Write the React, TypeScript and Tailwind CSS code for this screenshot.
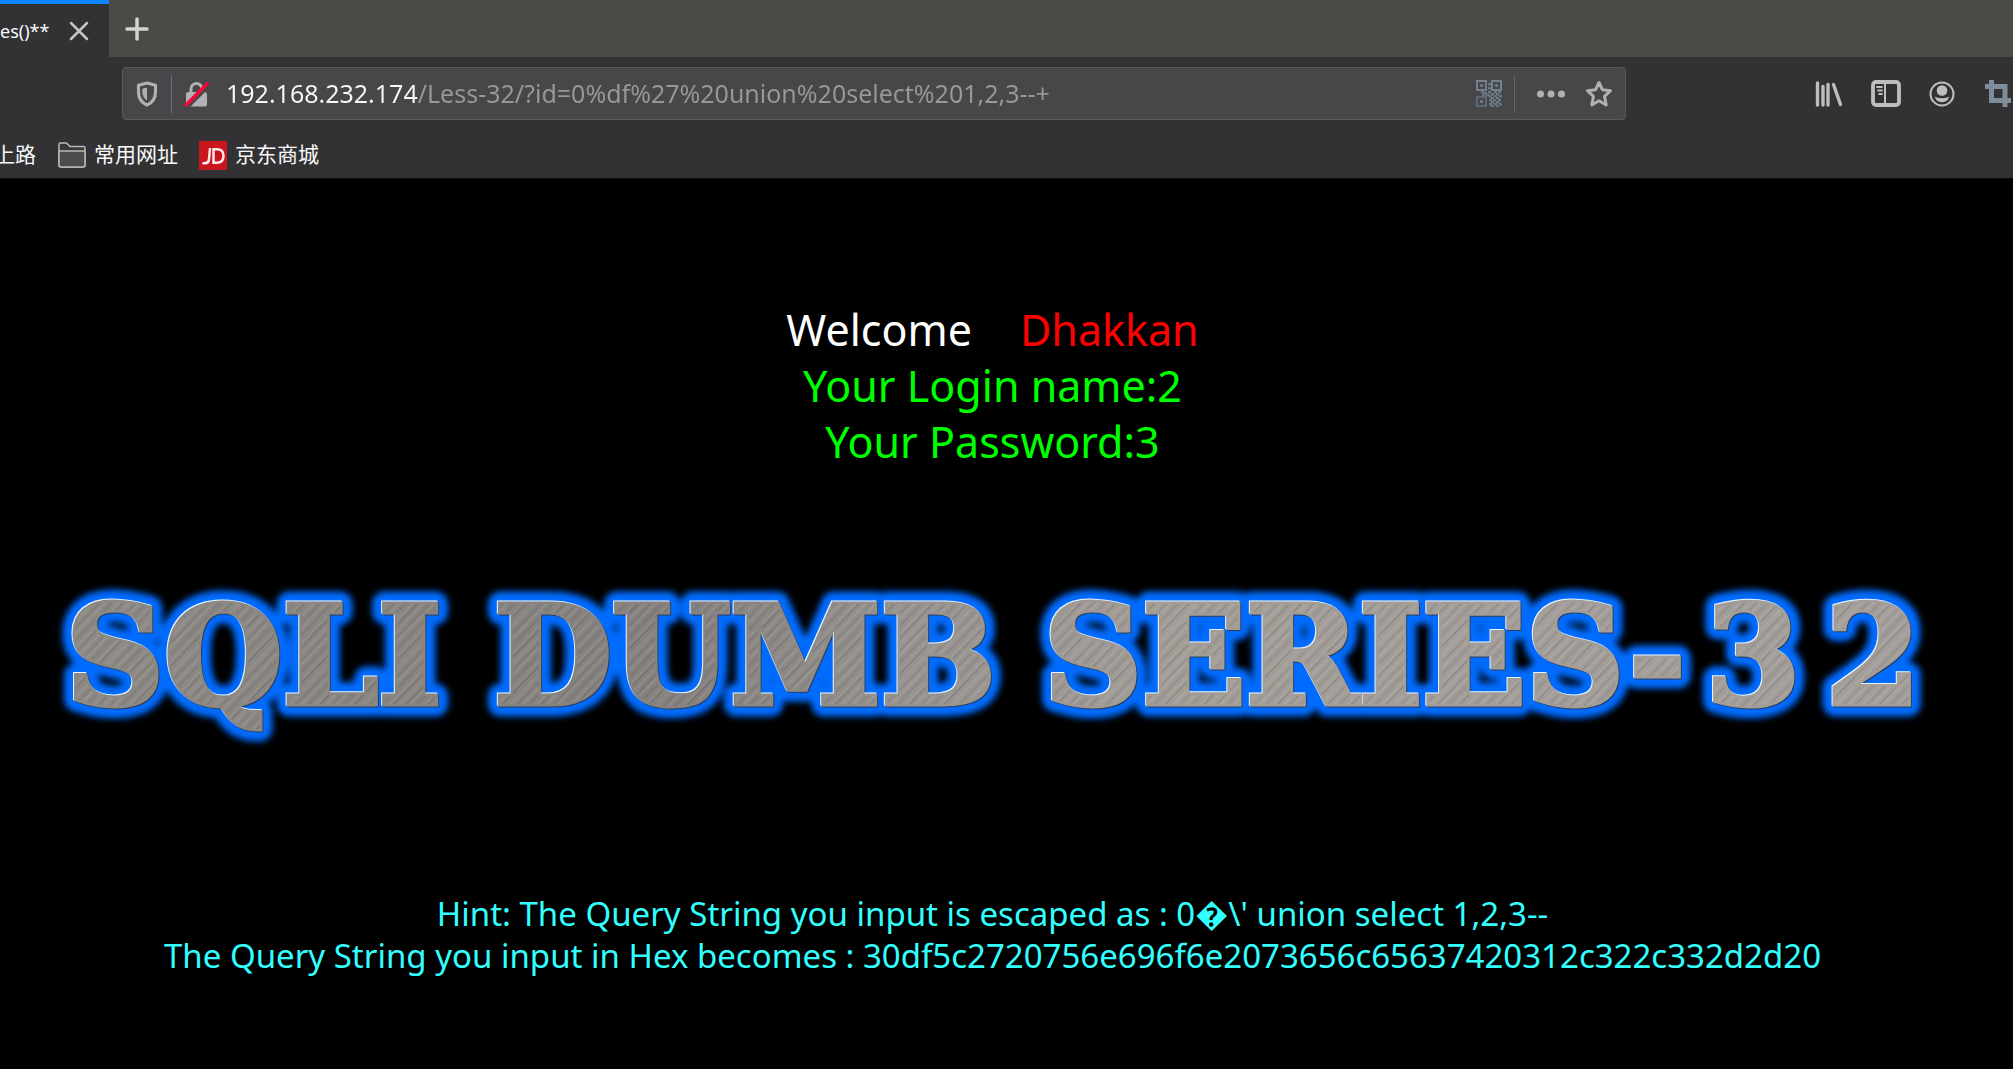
import React from "react";

const uiFont = "font-['Noto_Sans','Noto_Sans_CJK_SC',sans-serif]";

function ShieldIcon() {
  return (
    <svg width="24" height="26" viewBox="0 0 24 26" aria-hidden="true">
      <path
        d="M12 2 L20.5 4.3 V11 C20.5 17 17.5 21.6 12 24 C6.500 21.600 3.500 17 3.500 11 V4.300 Z"
        fill="none"
        stroke="#b1b1b3"
        strokeWidth="3.200"
        strokeLinejoin="round"
      />
      <path d="M12 6.500 V19.500 C8.800 17.500 7.400 14.500 7.400 11 V7.700 Z" fill="#b1b1b3" />
    </svg>
  );
}

function InsecureLockIcon() {
  return (
    <svg width="26" height="26" viewBox="0 0 26 26" aria-hidden="true">
      <path d="M7 13 V8 A5.500 5.500 0 0 1 18 8 V13" fill="none" stroke="#b1b1b3" strokeWidth="3" />
      <rect x="2" y="11" width="21" height="14.500" rx="2.500" fill="#b1b1b3" />
      <path d="M3.500 26.500 L26 4" stroke="#474749" strokeWidth="3" />
      <path d="M2 24 L23.500 2.500" stroke="#ff0039" strokeWidth="3.200" strokeLinecap="round" />
    </svg>
  );
}

function QrIcon() {
  const cells = [
    [12, 3], [12, 7], [5, 11], [8, 12], [12, 11], [18, 11], [22, 11],
    [6, 14], [10, 14], [15, 13], [20, 13], [13, 15], [18, 15], [23, 15],
    [15, 17], [20, 17], [13, 19], [17, 19], [22, 19], [15, 21], [20, 21],
    [13, 23], [18, 23], [23, 23], [15, 25], [20, 25],
  ];
  return (
    <svg width="26" height="27" viewBox="0 0 26 27" fill="#6b7884" aria-hidden="true">
      <g fill="none" stroke="#73808d" strokeWidth="2">
        <rect x="1" y="1" width="9" height="9" />
        <rect x="16" y="1" width="9" height="9" />
        <rect x="1" y="17" width="9" height="9" stroke="#5c6874" />
      </g>
      <rect x="4" y="4" width="3" height="3" />
      <rect x="19" y="4" width="3" height="3" />
      <rect x="4" y="20" width="3" height="3" />
      {cells.map(([x, y]) => (
        <rect key={`${x}-${y}`} x={x} y={y} width="3" height="2.500" />
      ))}
    </svg>
  );
}

function StarIcon() {
  return (
    <svg width="28" height="28" viewBox="0 0 28 28" aria-hidden="true">
      <path
        d="M14 2.500 L17.400 9.700 L25.500 10.700 L19.500 16.300 L21.200 25 L14 20.800 L6.800 25 L8.500 16.300 L2.500 10.700 L10.600 9.700 Z"
        fill="none"
        stroke="#b1b1b3"
        strokeWidth="3"
        strokeLinejoin="round"
      />
    </svg>
  );
}

function LibraryIcon() {
  return (
    <svg width="28" height="26" viewBox="0 0 28 26" stroke="#bebebf" strokeWidth="3.400" strokeLinecap="round" aria-hidden="true">
      <path d="M2.500 2 V24 M8 5.500 V24 M13 3.500 V24 M18.500 3.500 L25.500 23.500" />
    </svg>
  );
}

function SidebarIcon() {
  return (
    <svg width="30" height="27" viewBox="0 0 30 27" fill="none" stroke="#bebebf" aria-hidden="true">
      <rect x="2" y="2" width="26" height="23" rx="3" strokeWidth="3.800" />
      <path d="M14 2 V25" strokeWidth="2" />
      <path d="M6 7 H11 M7 10.500 H11 M8 14 H11" strokeWidth="1.800" strokeLinecap="round" />
    </svg>
  );
}

function AccountIcon() {
  return (
    <svg width="26" height="26" viewBox="0 0 26 26" aria-hidden="true">
      <circle cx="13" cy="13" r="11.500" fill="none" stroke="#bebebf" strokeWidth="2" />
      <circle cx="13" cy="9.500" r="5.300" fill="#bebebf" />
      <path d="M6 15.500 C8.500 17.800 17.500 17.800 20 15.500 C19.800 19 16.800 21.200 13 21.200 C9.200 21.200 6.200 19 6 15.500 Z" fill="#bebebf" />
    </svg>
  );
}

function CropIcon() {
  return (
    <svg width="28" height="27" viewBox="0 0 28 27" fill="none" stroke="#7f8c99" strokeWidth="5" aria-hidden="true">
      <path d="M6.500 0 V20.500 H26" />
      <path d="M0 6.500 H20 V27" />
    </svg>
  );
}

function FolderIcon() {
  return (
    <svg width="28" height="26" viewBox="0 0 28 26" stroke="#b9b9ba" strokeWidth="1.500" strokeLinejoin="round" aria-hidden="true">
      <path d="M1 23 V2.500 Q1 1 2.500 1 H8.500 L12 4.500 H25.500 Q27 4.500 27 6 V23 Q27 25 25 25 H3 Q1 25 1 23 Z" fill="#38383a" />
      <path d="M1 9 H27 V23 Q27 25 25 25 H3 Q1 25 1 23 Z" fill="#4c4c4e" />
    </svg>
  );
}

function JdIcon() {
  return (
    <svg width="28" height="29" viewBox="0 0 28 29" aria-hidden="true">
      <rect width="28" height="29" fill="#c9151e" />
      <g fill="none" stroke="#fbe9ea" strokeWidth="2.500">
        <path d="M11 7 L10 18.500 Q9.500 22.300 6 22.300 H3.500" />
        <path d="M14.500 22 V8.300 H18 Q24.500 8.300 24.500 15 Q24.500 21.700 18 21.700 H13.300" />
      </g>
    </svg>
  );
}

function LogoWords() {
  return (
    <>
      <text x="66" y="134">SQLI</text>
      <text x="494" y="134">DUMB</text>
      <text x="1044" y="134">SERIES-</text>
      <text x="1706" y="134">3</text>
      <text x="1826" y="134">2</text>
    </>
  );
}

function Logo() {
  return (
    <svg
      viewBox="0 0 1985 180"
      className="block h-auto w-full font-['DejaVu_Serif',serif] text-[136px] font-bold"
      role="img"
      aria-label="SQLI DUMB SERIES-32"
    >
      <defs>
        <linearGradient id="steel" gradientUnits="userSpaceOnUse" x1="0" y1="0" x2="1985" y2="0">
          <stop offset="0" stopColor="#8e8a86" />
          <stop offset="0.350" stopColor="#85817e" />
          <stop offset="0.450" stopColor="#96928f" />
          <stop offset="0.600" stopColor="#a39d98" />
          <stop offset="1" stopColor="#a39e9a" />
        </linearGradient>
        <pattern id="brush" width="400" height="53" patternUnits="userSpaceOnUse" patternTransform="rotate(-46)">
          <rect y="2" width="400" height="1" fill="#fff" opacity="0.120" />
          <rect y="5" width="400" height="1" fill="#000" opacity="0.160" />
          <rect y="9" width="400" height="2" fill="#fff" opacity="0.080" />
          <rect y="14" width="400" height="1" fill="#000" opacity="0.120" />
          <rect y="17" width="400" height="1" fill="#fff" opacity="0.140" />
          <rect y="21" width="400" height="3" fill="#000" opacity="0.060" />
          <rect y="27" width="400" height="1" fill="#fff" opacity="0.100" />
          <rect y="30" width="400" height="1" fill="#000" opacity="0.160" />
          <rect y="35" width="400" height="3" fill="#fff" opacity="0.060" />
          <rect y="41" width="400" height="1" fill="#000" opacity="0.130" />
          <rect y="45" width="400" height="1" fill="#fff" opacity="0.150" />
          <rect y="49" width="400" height="2" fill="#000" opacity="0.080" />
        </pattern>
        <filter id="glow" filterUnits="userSpaceOnUse" x="0" y="0" width="1985" height="180">
          <feGaussianBlur stdDeviation="3" />
        </filter>
      </defs>
      <g filter="url(#glow)" fill="#006cff" stroke="#006cff" strokeWidth="25" strokeLinejoin="round" aria-hidden="true">
        <LogoWords />
      </g>
      <g transform="translate(1 1)" fill="#2c3f5c" stroke="#2c3f5c" strokeWidth="5" aria-hidden="true">
        <LogoWords />
      </g>
      <g transform="translate(-1 -1)" fill="#e8f4ff" stroke="#e8f4ff" strokeWidth="5" aria-hidden="true">
        <LogoWords />
      </g>
      <g fill="url(#steel)" stroke="url(#steel)" strokeWidth="5">
        <LogoWords />
      </g>
      <g fill="url(#brush)" aria-hidden="true">
        <LogoWords />
      </g>
    </svg>
  );
}

function TabStrip() {
  return (
    <div className="flex h-[57px] bg-[#4b4a46]">
      <div className="flex w-[109px] items-center justify-between border-t-4 border-[#0a84ff] bg-[#323234] pr-5">
        <span className="text-lg text-[#f9f9fa]">es()**</span>
        <button aria-label="Close tab">
          <svg width="20" height="20" viewBox="0 0 20 20" stroke="#c4c4c5" strokeWidth="2.500" strokeLinecap="round">
            <path d="M2 2 L18 18 M18 2 L2 18" />
          </svg>
        </button>
      </div>
      <button aria-label="New tab" className="ml-4">
        <svg width="24" height="24" viewBox="0 0 24 24" stroke="#d2d2cf" strokeWidth="3.500" strokeLinecap="round">
          <path d="M12 2 V22 M2 12 H22" />
        </svg>
      </button>
    </div>
  );
}

function Toolbar() {
  return (
    <div className="flex items-center pt-2.5 pl-[122px]">
      <div className="flex h-[53px] flex-1 items-center rounded-sm border border-[#5a5a5c] bg-[#474749] px-3">
        <button aria-label="Tracking protection">
          <ShieldIcon />
        </button>
        <span className="mx-3 h-[38px] w-px bg-[#66707c]" />
        <button aria-label="Connection is not secure">
          <InsecureLockIcon />
        </button>
        <input
          aria-label="Address"
          readOnly
          value="192.168.232.174/Less-32/?id=0%df%27%20union%20select%201,2,3--+"
          className="ml-4 min-w-0 flex-1 bg-[linear-gradient(90deg,#f9f9fa_192px,#98989a_192px)] bg-clip-text text-[25px] text-transparent outline-none"
        />
        <button aria-label="QR code">
          <QrIcon />
        </button>
        <span className="mx-3 h-[38px] w-px bg-[#66666a]" />
        <button aria-label="Page actions" className="mx-2.5">
          <svg width="28" height="8" viewBox="0 0 28 8" fill="#b1b1b3">
            <circle cx="3.500" cy="4" r="3.500" />
            <circle cx="14" cy="4" r="3.500" />
            <circle cx="24.500" cy="4" r="3.500" />
          </svg>
        </button>
        <button aria-label="Bookmark this page" className="ml-2.5">
          <StarIcon />
        </button>
      </div>
      <div className="ml-[189px] flex gap-7">
        <button aria-label="Library">
          <LibraryIcon />
        </button>
        <button aria-label="Sidebars">
          <SidebarIcon />
        </button>
        <button aria-label="Account">
          <AccountIcon />
        </button>
        <button aria-label="Take a screenshot" className="ml-0.5">
          <CropIcon />
        </button>
      </div>
    </div>
  );
}

function BookmarksBar() {
  return (
    <nav className="flex h-[58px] items-center pt-3 text-[21px] text-[#f9f9fa]">
      <a href="#start" className="flex w-9 justify-end whitespace-nowrap">
        上路
      </a>
      <a href="#common" className="ml-[22px] flex items-center gap-2">
        <FolderIcon />
        常用网址
      </a>
      <a href="#jd" className="ml-[21px] flex items-center gap-2">
        <JdIcon />
        京东商城
      </a>
    </nav>
  );
}

export default function App() {
  return (
    <div className={`min-h-screen overflow-hidden bg-black ${uiFont}`}>
      <header className="border-b border-[#0c0c0d] bg-[#323234]">
        <TabStrip />
        <Toolbar />
        <BookmarksBar />
      </header>
      <main className="pt-[123px] pr-7 text-center">
        <div className="text-[43px] leading-[56px] text-[#00ff00]">
          <p className="flex justify-center gap-12">
            <span className="text-white">Welcome</span>
            <span className="text-[#ff0000]">Dhakkan</span>
          </p>
          <p>Your Login name:2</p>
          <p>Your Password:3</p>
        </div>
        <div className="mt-[100px]">
          <Logo />
        </div>
        <div className="mt-[143px] text-[33px] leading-[42px] text-[#33ffff]">
          <p>Hint: The Query String you input is escaped as : 0�\' union select 1,2,3--</p>
          <p>The Query String you input in Hex becomes : 30df5c2720756e696f6e2073656c65637420312c322c332d2d20</p>
        </div>
      </main>
    </div>
  );
}
